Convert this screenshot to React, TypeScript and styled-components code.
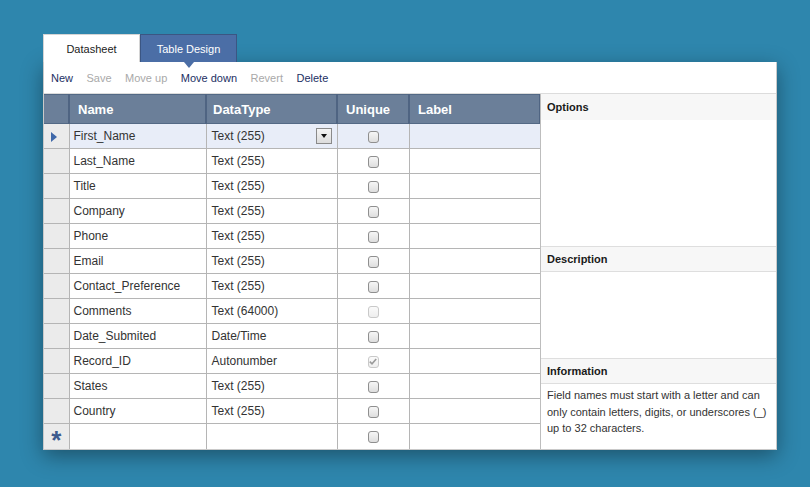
import React from "react";
import styled, { createGlobalStyle } from "styled-components";

const GlobalStyle = createGlobalStyle`
  html, body { margin: 0; padding: 0; }
  body {
    background: #2e86ad;
    font-family: "Liberation Sans", Arial, sans-serif;
  }
`;

type CheckState = "normal" | "disabled" | "checkedDisabled";

type Field = {
  name: string;
  type: string;
  state?: CheckState;
};

const fields: Field[] = [
  { name: "First_Name", type: "Text (255)" },
  { name: "Last_Name", type: "Text (255)" },
  { name: "Title", type: "Text (255)" },
  { name: "Company", type: "Text (255)" },
  { name: "Phone", type: "Text (255)" },
  { name: "Email", type: "Text (255)" },
  { name: "Contact_Preference", type: "Text (255)" },
  { name: "Comments", type: "Text (64000)", state: "disabled" },
  { name: "Date_Submited", type: "Date/Time" },
  { name: "Record_ID", type: "Autonumber", state: "checkedDisabled" },
  { name: "States", type: "Text (255)" },
  { name: "Country", type: "Text (255)" },
];

const Page = styled.div`
  min-height: 100vh;
  box-sizing: border-box;
  padding: 34px 0 0 43px;
`;

const Window = styled.div`
  width: 734px;
`;

const TabBar = styled.div`
  display: flex;
  height: 28px;
`;

const Tab = styled.div<{ $active?: boolean }>`
  position: relative;
  width: 97px;
  box-sizing: border-box;
  display: flex;
  align-items: center;
  justify-content: center;
  font-size: 11px;
  padding-top: 1px;
  color: ${({ $active }) => ($active ? "#ffffff" : "#222")};
  background: ${({ $active }) => ($active ? "#4b6ea6" : "#ffffff")};
  border: 1px solid ${({ $active }) => ($active ? "#3b5683" : "#d4d4d4")};
  border-bottom: none;

  ${({ $active }) =>
    $active &&
    `
    &::after {
      content: "";
      position: absolute;
      left: 50%;
      bottom: -6px;
      margin-left: -5px;
      border-left: 5px solid transparent;
      border-right: 5px solid transparent;
      border-top: 6px solid #4b6ea6;
      z-index: 2;
    }
  `}
`;

const Panel = styled.div`
  background: #ffffff;
  border: 1px solid #c9c9c9;
  border-top: none;
  box-shadow: 0 6px 20px rgba(0, 0, 0, 0.38);
`;

const Toolbar = styled.div`
  height: 32px;
  display: flex;
  align-items: center;
  gap: 13.5px;
  padding: 0 0 0 7px;
  border-bottom: 1px solid #dcdcdc;
  box-sizing: border-box;
`;

const ToolButton = styled.span<{ $disabled?: boolean }>`
  font-size: 11px;
  color: ${({ $disabled }) => ($disabled ? "#a9a9a9" : "#1c2f63")};
  cursor: default;
`;

const Body = styled.div`
  display: grid;
  grid-template-columns: 496px 1fr;
`;

const Grid = styled.table`
  border-collapse: collapse;
  table-layout: fixed;
  width: 496px;
  font-size: 12px;
  color: #333;

  tbody tr:last-child td {
    border-bottom: none;
  }
`;

const HeadCell = styled.th`
  height: 29px;
  box-sizing: border-box;
  background: #6b7f99;
  color: #ffffff;
  font-size: 13px;
  font-weight: bold;
  text-align: left;
  padding: 0 0 0 8px;
  border-top: 1px solid #536985;
  border-bottom: 1px solid #536985;
  border-right: 2px solid #4f6482;
`;

const Row = styled.tr<{ $selected?: boolean }>`
  background: ${({ $selected }) => ($selected ? "#e8edf8" : "#ffffff")};
`;

const SelectorCell = styled.td`
  height: 25px;
  box-sizing: border-box;
  padding: 0;
  background: #ebebeb;
  border-bottom: 1px solid #b5b5b5;
  border-right: 1px solid #b5b5b5;
  text-align: center;
  vertical-align: middle;
`;

const Cell = styled.td<{ $center?: boolean }>`
  height: 25px;
  box-sizing: border-box;
  padding: 0 0 0 ${({ $center }) => ($center ? "0" : "4px")};
  border-bottom: 1px solid #b5b5b5;
  border-right: 1px solid #b5b5b5;
  white-space: nowrap;
  text-align: ${({ $center }) => ($center ? "center" : "left")};
  vertical-align: middle;
`;

const TypeWrap = styled.div`
  display: flex;
  align-items: center;
  justify-content: space-between;
  padding-right: 5px;
`;

const DropButton = styled.span`
  width: 16px;
  height: 16px;
  box-sizing: border-box;
  border: 1px solid #8a8a8a;
  background: linear-gradient(#f4f4f4, #dcdcdc);
  display: flex;
  align-items: center;
  justify-content: center;
  &::before {
    content: "";
    border-left: 3px solid transparent;
    border-right: 3px solid transparent;
    border-top: 4px solid #111;
  }
`;

const Pointer = styled.span`
  display: inline-block;
  border-top: 5px solid transparent;
  border-bottom: 5px solid transparent;
  border-left: 6px solid #3f68a9;
  margin-right: 4px;
  vertical-align: middle;
`;

const NewMark = styled.span`
  display: block;
  height: 25px;
  box-sizing: border-box;
  padding-top: 4px;
  font-size: 26px;
  font-weight: bold;
  line-height: 25px;
  color: #3d5a8d;
`;

const Check = styled.span<{ $state: CheckState }>`
  display: inline-flex;
  align-items: center;
  justify-content: center;
  width: 11px;
  height: 12px;
  box-sizing: border-box;
  border-radius: 3px;
  vertical-align: middle;
  border: 1px solid
    ${({ $state }) => ($state === "normal" ? "#8f8f8f" : "#c9c9c9")};
  background: ${({ $state }) =>
    $state === "normal"
      ? "linear-gradient(#f6f6f6, #dedede)"
      : "linear-gradient(#fafafa, #eeeeee)"};
`;

const Side = styled.div`
  display: flex;
  flex-direction: column;
  border-left: 1px solid #bdbdbd;
`;

const SideHead = styled.div<{ $first?: boolean }>`
  height: 26px;
  box-sizing: border-box;
  display: flex;
  align-items: center;
  padding-left: 6px;
  background: #f7f7f7;
  font-size: 11px;
  font-weight: bold;
  color: #1a1a1a;
  border-top: ${({ $first }) => ($first ? "none" : "1px solid #dedede")};
  border-bottom: ${({ $first }) => ($first ? "none" : "1px solid #dedede")};
`;

const SideBody = styled.div<{ $height?: number }>`
  height: ${({ $height }) => ($height ? `${$height}px` : "auto")};
  flex: ${({ $height }) => ($height ? "none" : "1")};
  padding: 3px 6px 0 6px;
  box-sizing: border-box;
  font-size: 11px;
  line-height: 16.5px;
  color: #333;
`;

function CheckBox({ state }: { state: CheckState }) {
  return (
    <Check $state={state}>
      {state === "checkedDisabled" && (
        <svg width="8" height="7" viewBox="0 0 8 7">
          <path d="M0.8 3.6 L3 5.8 L7.2 1" stroke="#9a9a9a" strokeWidth="1.6" fill="none" />
        </svg>
      )}
    </Check>
  );
}

export default function App() {
  return (
    <Page>
      <GlobalStyle />
      <Window>
        <TabBar>
          <Tab>Datasheet</Tab>
          <Tab $active>Table Design</Tab>
        </TabBar>
        <Panel>
          <Toolbar>
            <ToolButton>New</ToolButton>
            <ToolButton $disabled>Save</ToolButton>
            <ToolButton $disabled>Move up</ToolButton>
            <ToolButton>Move down</ToolButton>
            <ToolButton $disabled>Revert</ToolButton>
            <ToolButton>Delete</ToolButton>
          </Toolbar>
          <Body>
            <Grid>
              <colgroup>
                <col style={{ width: 25 }} />
                <col style={{ width: 137 }} />
                <col style={{ width: 131 }} />
                <col style={{ width: 72 }} />
                <col style={{ width: 131 }} />
              </colgroup>
              <thead>
                <tr>
                  <HeadCell />
                  <HeadCell>Name</HeadCell>
                  <HeadCell style={{ paddingLeft: 6 }}>DataType</HeadCell>
                  <HeadCell>Unique</HeadCell>
                  <HeadCell>Label</HeadCell>
                </tr>
              </thead>
              <tbody>
                {fields.map((f, i) => (
                  <Row key={f.name} $selected={i === 0}>
                    <SelectorCell>{i === 0 && <Pointer />}</SelectorCell>
                    <Cell>{f.name}</Cell>
                    <Cell style={{ paddingLeft: 5 }}>
                      {i === 0 ? (
                        <TypeWrap>
                          {f.type}
                          <DropButton />
                        </TypeWrap>
                      ) : (
                        f.type
                      )}
                    </Cell>
                    <Cell $center>
                      <CheckBox state={f.state ?? "normal"} />
                    </Cell>
                    <Cell />
                  </Row>
                ))}
                <Row>
                  <SelectorCell>
                    <NewMark>*</NewMark>
                  </SelectorCell>
                  <Cell />
                  <Cell />
                  <Cell $center>
                    <CheckBox state="normal" />
                  </Cell>
                  <Cell />
                </Row>
              </tbody>
            </Grid>
            <Side>
              <SideHead $first>Options</SideHead>
              <SideBody $height={126} />
              <SideHead>Description</SideHead>
              <SideBody $height={86} />
              <SideHead>Information</SideHead>
              <SideBody>
                Field names must start with a letter and can only contain letters, digits, or
                underscores (_) up to 32 characters.
              </SideBody>
            </Side>
          </Body>
        </Panel>
      </Window>
    </Page>
  );
}
